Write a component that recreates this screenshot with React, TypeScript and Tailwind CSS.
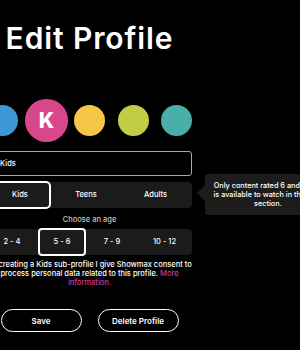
import React from "react";

export default function App() {
  const circles = [
    { c: "bg-[#3d97d6]", sel: false },
    { c: "bg-[#d8478c]", sel: true },
    { c: "bg-[#f6c646]", sel: false },
    { c: "bg-[#c2cd46]", sel: false },
    { c: "bg-[#4aaea9]", sel: false },
  ];
  return (
    <div className="w-[300px] h-[350px] bg-black overflow-hidden relative text-white font-['Inter',sans-serif]">
      <div className="ml-[-13px] w-[205px] flex flex-col items-center pt-[20px]">
        <h1 className="text-[30px] font-semibold leading-[36px] tracking-[0.9px] whitespace-nowrap">Edit Profile</h1>
        <div className="mt-[49px] flex items-center gap-[12.5px] h-[31px]">
          {circles.map((x, i) => (
            <div
              key={i}
              className={`w-[31px] h-[31px] rounded-full flex items-center justify-center ${x.c} ${x.sel ? "scale-[1.39]" : ""}`}
            >
              {x.sel && <span className="text-[15px] font-extrabold leading-none">K</span>}
            </div>
          ))}
        </div>
        <div className="mt-[15px] w-full h-[25px] border-[1.5px] border-[#a8a8a8] rounded-[3px] flex items-center pl-[12px] text-[7.5px] font-medium">
          Kids
        </div>
        <div className="mt-[6px] w-full h-[26px] bg-[#1b1b1b] rounded-[4px] flex items-center text-[7.5px] font-medium">
          <div className="w-[66px] h-full flex items-center">
            <div className="mx-[2px] w-full h-[28px] border-2 border-white rounded-[5px] flex items-center justify-center">Kids</div>
          </div>
          <div className="w-[66px] flex items-center justify-center">Teens</div>
          <div className="flex-1 flex items-center justify-center">Adults</div>
        </div>
        <div className="mt-[5px] text-[7.5px] leading-[14px] text-[#c4c4c4] font-medium">Choose an age</div>
        <div className="mt-[2px] w-full h-[26px] bg-[#1b1b1b] rounded-[4px] flex items-center text-[7.5px] font-medium">
          <div className="w-[50px] flex items-center justify-center whitespace-nowrap">2 - 4</div>
          <div className="w-[50px] h-full flex items-center">
            <div className="mx-[1px] w-full h-[28px] border-2 border-white rounded-[4px] flex items-center justify-center whitespace-nowrap">5 - 6</div>
          </div>
          <div className="w-[50px] flex items-center justify-center whitespace-nowrap">7 - 9</div>
          <div className="flex-1 flex items-center justify-center whitespace-nowrap">10 - 12</div>
        </div>
        <p className="mt-[5px] text-center text-[7.5px] leading-[9px] whitespace-nowrap font-medium">
          By creating a Kids sub-profile I give Showmax consent to
          <br />
          process personal data related to this profile. <span className="text-[#d6378f]">More</span>
          <br />
          <span className="text-[#d6378f]">information.</span>
        </p>
        <div className="mt-[22px] flex gap-[16px]">
          <button className="w-[81px] h-[23px] border-[1.5px] border-white rounded-full text-[8px] font-semibold">Save</button>
          <button className="w-[81px] h-[23px] border-[1.5px] border-white rounded-full text-[8px] font-semibold">Delete Profile</button>
        </div>
      </div>
      <div className="absolute left-[205px] top-[174px] w-[126px] h-[41px] bg-[#1c1c1c] rounded-[3px] text-center text-[7.3px] leading-[9px] pt-[7px] whitespace-nowrap font-medium">
        <div className="absolute left-[-8px] top-[11px] w-0 h-0 border-y-[8px] border-y-transparent border-r-[8px] border-r-[#1c1c1c]" />
        Only content rated 6 and under
        <br />
        is available to watch in the Kids
        <br />
        section.
      </div>
    </div>
  );
}
